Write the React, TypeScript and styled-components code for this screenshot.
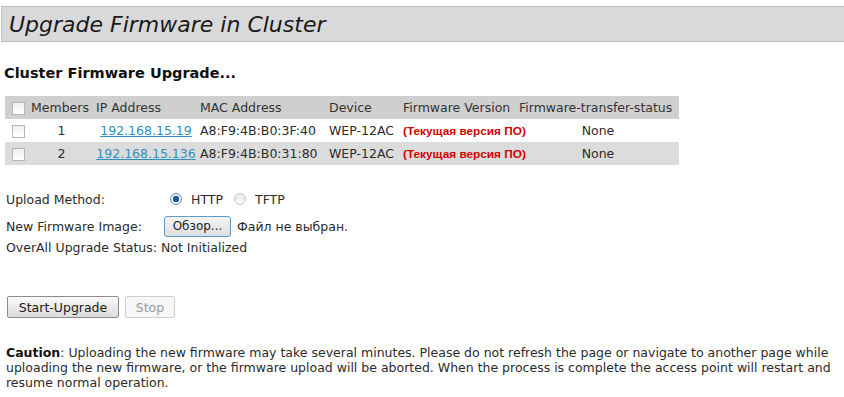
import React, { useState } from 'react';
import styled, { createGlobalStyle } from 'styled-components';

const GlobalStyle = createGlobalStyle`
body {
  margin: 0;
  background: #ffffff;
  font-family: "DejaVu Sans", Verdana, sans-serif;
  font-size: 12.5px;
  color: #2b2b2b;
}
`

const Page = styled.div`
width: 844px;
height: 397px;
overflow: hidden;
padding-top: 6px;
box-sizing: border-box;
`
const TitleBar = styled.div`
margin-left: 1px;
height: 34px;
background-color: #d9d9d9;
border-top: 1px solid #bcbcbc;
border-bottom: 1px solid #bcbcbc;
border-left: 1px solid #bcbcbc;
display: flex;
align-items: center;
padding-left: 7px;
`
const Title = styled.h1`
margin: 0;
font-size: 22px;
font-weight: normal;
font-style: italic;
color: #1a1a1a;
`
const Content = styled.div`
padding: 0 6px;
`
const SectionTitle = styled.h2`
margin: 23px 0 0 -2px;
font-size: 14.5px;
font-weight: bold;
color: #111;
height: 18px;
`
const Table = styled.table`
margin-top: 13px;
margin-left: -1px;
border-collapse: collapse;
table-layout: fixed;
width: 674px;
`
const Row = styled.tr<{ shaded: boolean }>`
height: 23px;
background-color: ${props => props.shaded ? '#dcdcdc' : '#ffffff'};
`
const HeadRow = styled.tr`
height: 23px;
background-color: #cfcfcf;
`
const HeadCell = styled.th<{ align?: string }>`
padding: 0 2px;
font-weight: normal;
text-align: ${props => props.align || 'left'};
color: #333;
white-space: nowrap;
`
const Cell = styled.td<{ align?: string }>`
padding: 0 2px;
text-align: ${props => props.align || 'left'};
white-space: nowrap;
color: #2b2b2b;
`
const Box = styled.span`
display: inline-block;
width: 13px;
height: 13px;
border: 1px solid #b5b5b5;
background: linear-gradient(#f0f0f0, #ffffff);
vertical-align: middle;
box-sizing: border-box;
margin-left: 5px;
`
const IpLink = styled.a`
color: #2f8fc0;
text-decoration: underline;
`
const CurrentVersion = styled.span`
font-family: "Liberation Sans", Arial, sans-serif;
font-weight: bold;
font-size: 11.8px;
color: #d40000;
`
const Form = styled.div`
margin-top: 20px;
display: flex;
flex-direction: column;
`
const FormRow = styled.div<{ h: number }>`
display: flex;
align-items: center;
height: ${props => props.h}px;
`
const Label = styled.span`
width: 158px;
flex-shrink: 0;
`
const Radio = styled.span<{ checked: boolean }>`
display: inline-block;
width: 12px;
height: 12px;
border-radius: 50%;
border: 1px solid ${props => props.checked ? '#6b8fb5' : '#c4c4c4'};
background: ${props => props.checked ? 'radial-gradient(circle, #1d5a9a 0 3px, #eaf2fb 3.5px)' : 'linear-gradient(#e8e8e8, #fbfbfb)'};
box-sizing: border-box;
margin: 0 9px 0 6px;
`
const RadioLabel = styled.span`
margin-right: 5px;
`
const BrowseButton = styled.button`
font-family: "DejaVu Sans", Verdana, sans-serif;
font-size: 12px;
color: #222;
height: 21px;
width: 67px;
padding: 0;
border: 1px solid #5d9ccf;
border-radius: 3px;
background: linear-gradient(#f4f4f4, #dedede);
margin-right: 6px;
`
const Buttons = styled.div`
margin-top: 41px;
display: flex;
gap: 6px;
margin-left: 1px;
`
const ActionButton = styled.button<{ disabled?: boolean; w: number }>`
font-family: "DejaVu Sans", Verdana, sans-serif;
font-size: 12.5px;
width: ${props => props.w}px;
height: 22px;
padding: 0;
border-radius: 2px;
border: 1px solid ${props => props.disabled ? '#cfcfcf' : '#8c8c8c'};
background: ${props => props.disabled ? '#f6f6f6' : 'linear-gradient(#fafafa, #dcdcdc)'};
color: ${props => props.disabled ? '#9a9a9a' : '#1a1a1a'};
`
const Caution = styled.p`
margin: 27px 0 0 0;
line-height: 15px;
color: #2b2b2b;
`
const CautionLead = styled.b`
color: #111;
`

type Member = { id: number; ip: string; mac: string; device: string };

const members: Member[] = [
  { id: 1, ip: '192.168.15.19', mac: 'A8:F9:4B:B0:3F:40', device: 'WEP-12AC' },
  { id: 2, ip: '192.168.15.136', mac: 'A8:F9:4B:B0:31:80', device: 'WEP-12AC' },
];

export default function App() {
  const [method, setMethod] = useState<string>('HTTP');
  return (
    <Page>
      <GlobalStyle />
      <TitleBar>
        <Title>Upgrade Firmware in Cluster</Title>
      </TitleBar>
      <Content>
        <SectionTitle>Cluster Firmware Upgrade...</SectionTitle>
        <Table>
          <colgroup>
            <col style={{ width: 24 }} />
            <col style={{ width: 65 }} />
            <col style={{ width: 104 }} />
            <col style={{ width: 129 }} />
            <col style={{ width: 74 }} />
            <col style={{ width: 116 }} />
            <col style={{ width: 162 }} />
          </colgroup>
          <thead>
            <HeadRow>
              <HeadCell><Box /></HeadCell>
              <HeadCell>Members</HeadCell>
              <HeadCell>IP Address</HeadCell>
              <HeadCell>MAC Address</HeadCell>
              <HeadCell>Device</HeadCell>
              <HeadCell>Firmware Version</HeadCell>
              <HeadCell>Firmware-transfer-status</HeadCell>
            </HeadRow>
          </thead>
          <tbody>
            {members.map((m, i) => (
              <Row key={m.id} shaded={i % 2 === 1}>
                <Cell><Box /></Cell>
                <Cell align="center">{m.id}</Cell>
                <Cell align="center"><IpLink href="#">{m.ip}</IpLink></Cell>
                <Cell>{m.mac}</Cell>
                <Cell>{m.device}</Cell>
                <Cell><CurrentVersion>(Текущая версия ПО)</CurrentVersion></Cell>
                <Cell align="center">None</Cell>
              </Row>
            ))}
          </tbody>
        </Table>
        <Form>
          <FormRow h={28}>
            <Label>Upload Method:</Label>
            <Radio checked={method === 'HTTP'} onClick={() => setMethod('HTTP')} />
            <RadioLabel>HTTP</RadioLabel>
            <Radio checked={method === 'TFTP'} onClick={() => setMethod('TFTP')} />
            <RadioLabel>TFTP</RadioLabel>
          </FormRow>
          <FormRow h={26}>
            <Label>New Firmware Image:</Label>
            <BrowseButton>Обзор...</BrowseButton>
            <span>Файл не выбран.</span>
          </FormRow>
          <FormRow h={16}>
            <span>OverAll Upgrade Status: Not Initialized</span>
          </FormRow>
        </Form>
        <Buttons>
          <ActionButton w={112}>Start-Upgrade</ActionButton>
          <ActionButton w={50} disabled>Stop</ActionButton>
        </Buttons>
        <Caution>
          <CautionLead>Caution</CautionLead>: Uploading the new firmware may take several minutes. Please do not refresh the page or navigate to another page while uploading the new firmware, or the firmware upload will be aborted. When the process is complete the access point will restart and resume normal operation.
        </Caution>
      </Content>
    </Page>
  );
}
